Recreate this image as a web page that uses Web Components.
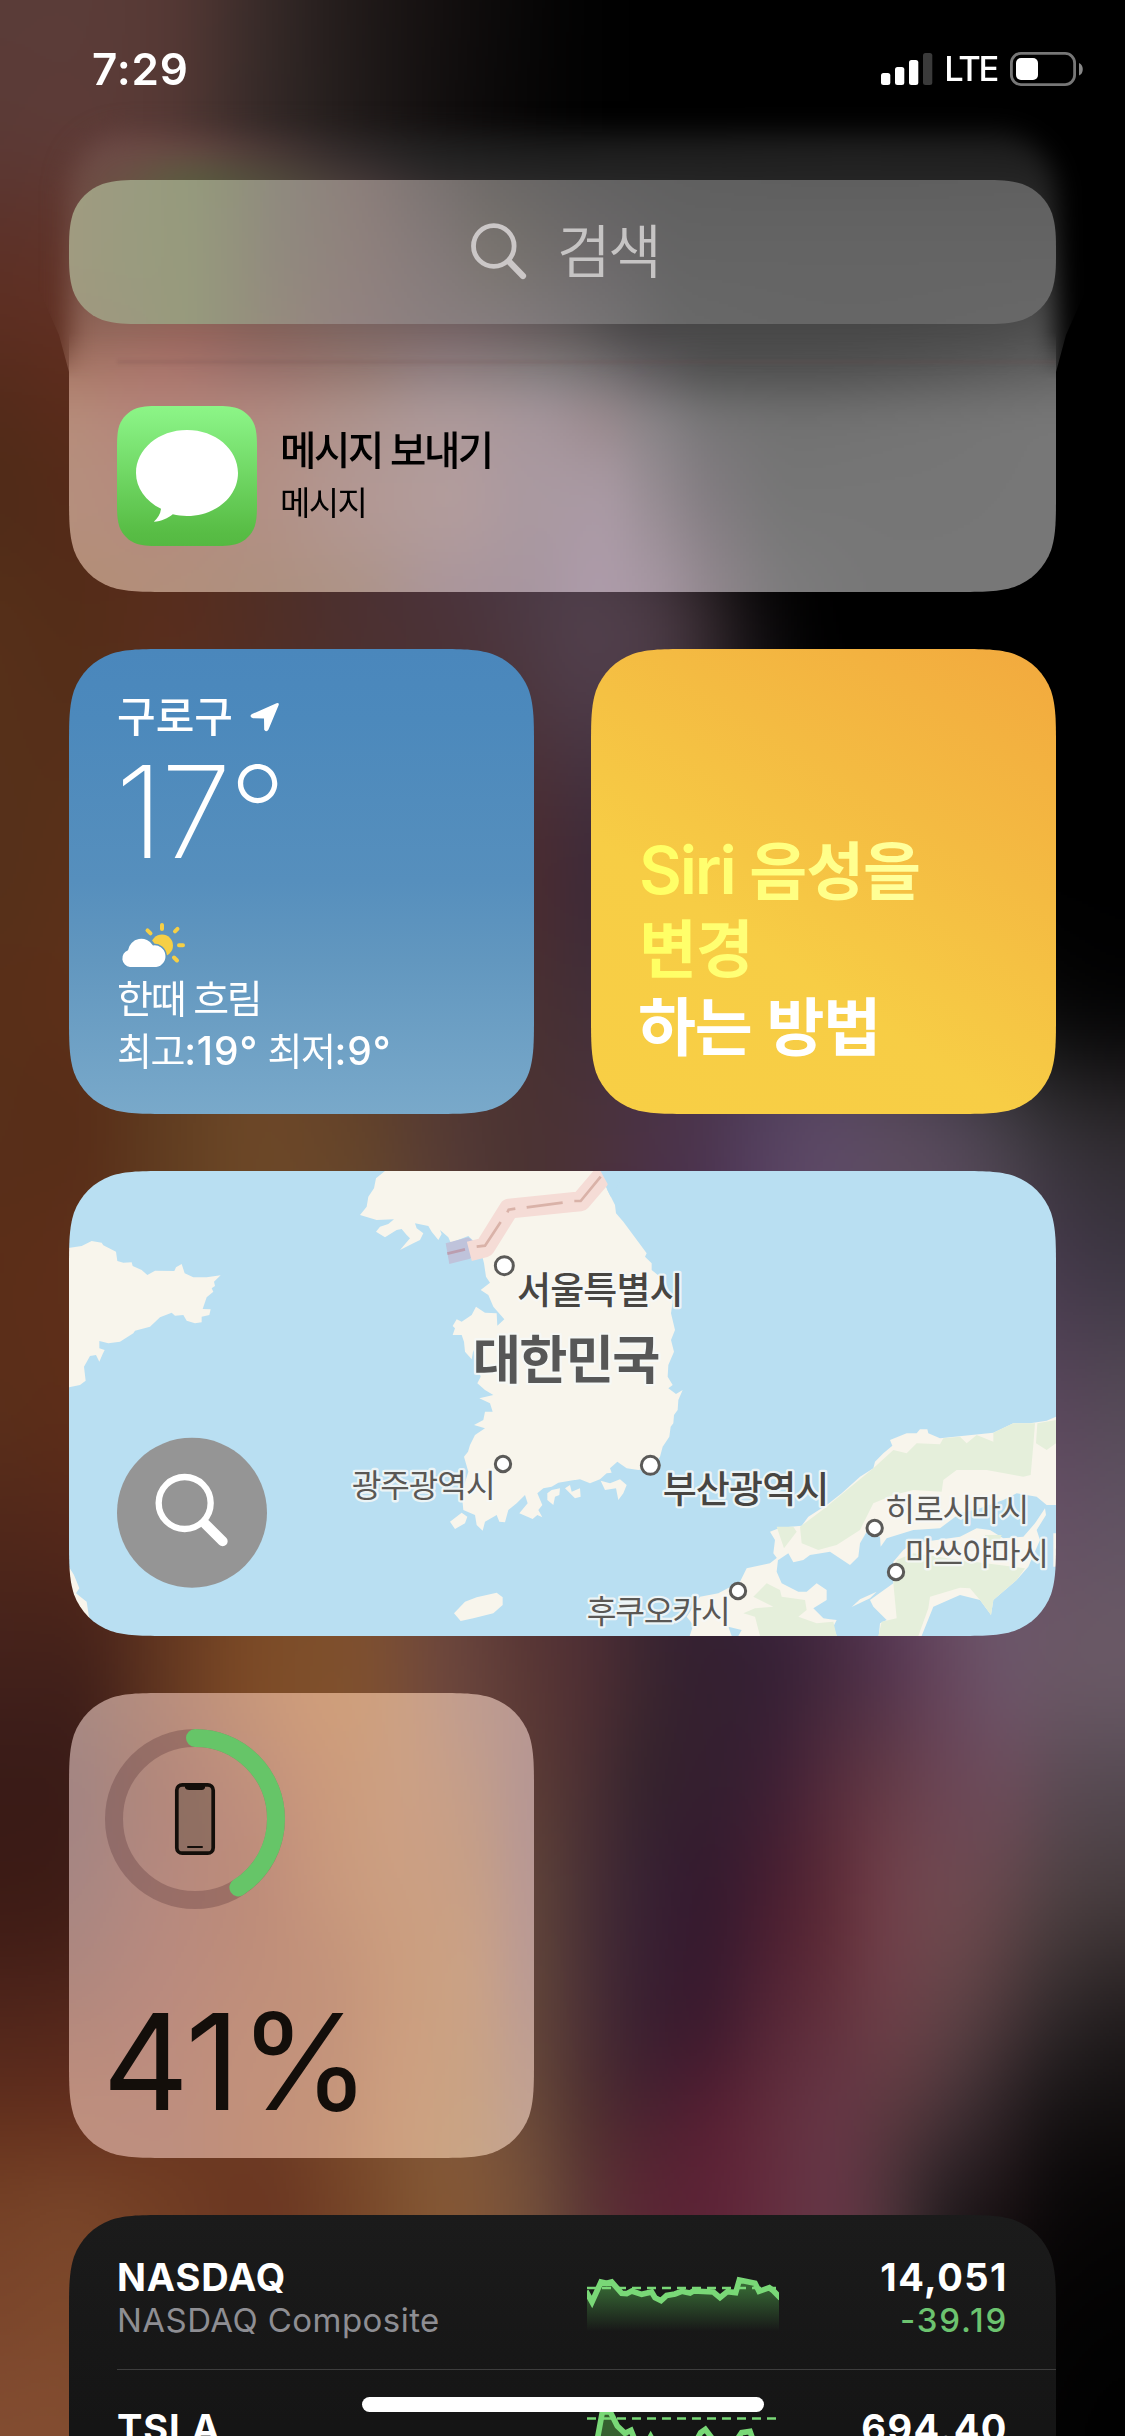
<!DOCTYPE html>
<html lang="ko">
<head>
<meta charset="utf-8">
<title>위젯</title>
<style>
html,body{margin:0;padding:0;background:#000}
body{width:1125px;height:2436px;overflow:hidden;font-family:"Inter","Noto Sans CJK KR",sans-serif}
</style>
</head>
<body>
<today-view></today-view>
<script>
const PALETTES={
 wall:{x:[0,69,160,260,350,450,530,590,650,700,760,830,890,950,1010,1056,1125],
  y:[0,130,240,310,380,500,620,880,1000,1140,1260,1400,1520,1665,1780,1900,2020,2120,2186,2300,2436],
  c:`5a3c38 5a3c38 563935 392b29 221b1a 130f0f 080707 020202 000000 000000 000000 000000 000000 000000 000000 000000 000000
5b3a36 5d3b37 563935 362a28 221c1b 110e0e 070606 020202 000000 000000 000000 000000 000000 000000 000000 000000 000000
5c3128 5f342a 563935 362a28 221c1b 110e0e 070606 020202 000000 000000 000000 000000 000000 000000 000000 000000 000000
5e2f22 603024 563025 3a2a28 2a2424 1a1718 0a0909 020202 000000 000000 000000 000000 000000 000000 000000 000000 000000
552b1c 5c2c1c 563025 4a3028 3a2a28 2a2424 1a1718 0a0909 000000 000000 000000 000000 000000 000000 000000 000000 000000
4f2b17 542a18 562c1c 503024 4a3030 4a3540 453845 3a3038 221c20 0a0809 000000 000000 000000 000000 000000 000000 000000
563019 542d18 582d1d 512e25 4c3030 4b3339 4d3a44 52404c 4e3d48 392d33 110e10 000000 000000 000000 000000 000000 000000
55301a 5a3019 5d371e 603c24 583828 4c3030 4a2b30 3e2a38 3a2a3a 30242e 201a22 100d11 000000 000000 000000 000000 000000
592f18 5c2f18 5f3a1f 68442a 603e2c 523632 4a3032 432f38 443044 443244 403448 383040 2a252e 1c1a20 100f11 060606 020203
572f19 572d18 603c20 6c4727 654429 543a34 4b3333 4b323a 4b3346 4c354e 54405e 5d4a66 5c4c60 55495a 464049 38343a 2f2b2f
5b2d18 5e2f19 623c20 6c4727 684830 5c3c34 4b3333 4b303c 4a2c48 4a3050 583e60 5d4a66 5c4c60 5a4a5c 504454 44394a 3c3642
5a2f1a 5d2d18 653c20 704827 704a30 603c34 4b3333 4b303c 402640 402848 503458 5a4462 604c64 604c64 5c4a60 58465a 544a56
51281a 55281a 603420 744927 784d2e 64423a 553436 4b303c 3a2436 382338 442a48 523650 60465e 6a5266 6c5668 655064 605362
43211b 43211a 613620 7d4b27 7f502e 6c463c 593735 4e2e33 3c2630 342030 352034 44293f 553650 66485f 6c566a 6b5866 6a5a66
391b17 3a1b17 5c3220 7d4b27 7f502e 6c463c 5b3b35 4a2f33 35232d 341f2f 3b1f33 542c3c 633b47 6b4656 6b4c5a 5d4b55 554a52
3d1b15 3f1c15 5a3020 744627 7a4d2e 704a3a 60443a 482f35 382133 351a2f 451d30 5c2b37 70404a 6f494f 60464a 4f4042 443a3c
51261b 54271b 60301f 704027 78502e 705038 624539 4b2f35 3a1f30 3b1a2e 512435 62313d 6b3f47 5e4145 463437 30282a 211c1d
63301d 652f1d 68341f 6c3c24 7a4b2c 80583a 6a4939 50302f 4c2230 561f32 602a3a 653645 5a383f 433035 281f22 171314 100e0e
733f24 764328 723e24 6b3722 764528 845735 744f3a 5c3635 5a2734 5c2336 632b3d 653645 4c3239 2a2024 1d1416 0d0a0b 080606
7a452b 7d482b 723e24 6b3722 764528 845735 744f3a 5c3635 5a2734 5c2336 632b3d 653645 4c3239 181214 0a0708 050404 030303
834d31 834d31 723e24 6b3722 764528 845735 744f3a 5c3635 5a2734 5c2336 632b3d 653645 4c3239 100c0e 040303 020202 000000`},
 glow:{x:[69,120,180,260,350,450,562,650,750,850,1000,1056],
  y:[132,150,178,325,365,422],
  c:`60423f 64443f 5c403b 443532 2c2625 1e1b1b 181818 181818 181818 181818 191919 191919
6c4a47 6e4b47 684944 4e3a38 312a2a 202020 1c1c1c 1d1d1d 1e1e1e 1f1f1f 1e1e1e 1c1c1c
6f4a44 6a5044 5c5a40 524c3c 433836 2c2929 262626 252525 242424 242424 242424 222222
8e6355 91665a 93645a 86625a 7d6561 756364 615a5b 4a4849 484848 484848 4c4c4c 525252
a67766 a7766a a5726a 98706a 91756f 8c7b7d 7b7373 5f5c5e 505050 525252 585858 606060
b78d7b b58a7a b2847a b08a80 ad938c ac9899 a2959a 878285 787778 727272 747474 777777`},
 message:{x:[69,160,260,350,450,530,600,650,720,800,900,1056],
  y:[324,365,393,415,500,592],
  c:`8e6355 93645a 86625a 7d6561 756364 665d5e 565253 4a4849 484848 484848 494949 525252
a67766 a8746a 98706a 91756f 8c7b7d 827a7b 716c6e 5f5c5e 505050 505050 535353 606060
b18371 b07e74 a87f77 a3867f 9f8e8f 968b8f 888083 767174 646464 616161 656565 6e6e6e
b68c7a b3847a b18980 ad928c ac9899 a5959a 98898d 878285 757475 717171 737373 777777
b58f7d b48b7e b29085 b29792 b29c9c aa99a0 a999a3 998e95 817c80 767676 767676 777777
b38e75 b28f7b ae907f ad9387 aa959a a896a0 ad9ba9 a797a3 8f868c 7c7b7c 777777 777777`},
 search:{x:[69,130,180,230,280,350,430,500,600,700,850,1056],
  y:[180,250,324],
  c:`a09c81 9a9b80 969a7d 92937c 8f8a7e 8c807b 7c7472 6e6a68 646363 606060 5f5f5f 606060
a09b80 9a9b7f 979a7d 94937d 918a7e 8f827d 847a79 78736f 6c696a 646464 646464 646464
a0987f 9c997f 989a7d 95937d 958b7e 928380 8a7f7f 847c7d 767374 686868 666666 686868`},
 battery:{x:[69,160,250,330,400,470,534],
  y:[1693,1790,1880,1980,2070,2158],
  c:`a98b83 b98f7e c8987a d09f7a cca083 bf9c90 b89791
a18483 b2877b c0907d cb9a7c cca084 c49e8a b39595
a68683 b5897f bd8c7a c9997d cc9f82 c79f86 b69797
ae877e b98a7e bf8e7a c3937a cb9d7e cba286 b79996
bb8c7c bd8d7e c2917b c4947b cd9f80 c9a284 bf9f94
c09280 be8f80 c29079 c79679 cda07f c9a586 c2a396`}
};

function squircle(w,h,r){
 const e=Math.min(1.52866*r,h/2),f=Math.min(1.08849*r,e*.8+.2*r),a=.86841*r,b=.63149*r,c=.07491*r,d=.37282*r,g=.16906*r;
 return `M${e},0H${w-e}C${w-f},0 ${w-a},0 ${w-b},${c}C${w-d},${g} ${w-g},${d} ${w-c},${b}C${w},${a} ${w},${f} ${w},${e}V${h-e}C${w},${h-f} ${w},${h-a} ${w-c},${h-b}C${w-g},${h-d} ${w-d},${h-g} ${w-b},${h-c}C${w-a},${h} ${w-f},${h} ${w-e},${h}H${e}C${f},${h} ${a},${h} ${b},${h-c}C${d},${h-g} ${g},${h-d} ${c},${h-b}C0,${h-a} 0,${h-f} 0,${h-e}V${e}C0,${f} 0,${a} ${c},${b}C${g},${d} ${d},${g} ${b},${c}C${a},0 ${f},0 ${e},0Z`;
}
function define(name,html,setup){
 const t=document.createElement('template');t.innerHTML=html;
 customElements.define(name,class extends HTMLElement{
  connectedCallback(){
   if(this.shadowRoot)return;
   this.attachShadow({mode:'open'}).append(t.content.cloneNode(true));
   if(setup)setup(this,this.shadowRoot);
  }
 });
}

/* Box blur along one axis, with the edge pixels repeated outside */
function boxBlur(src,n,lines,step,lineStep,r){
 const out=new Float32Array(src.length),k=2*r+1;
 for(let l=0;l<lines;l++)for(let ch=0;ch<3;ch++){
  const o=l*lineStep+ch,at=i=>src[o+Math.max(0,Math.min(n-1,i))*step];
  let sum=0;for(let i=-r;i<=r;i++)sum+=at(i);
  for(let i=0;i<n;i++){out[o+i*step]=sum/k;sum+=at(i+r+1)-at(i-r)}
 }
 return out;
}

/* Smooth colour mesh, interpolated between the stops of a palette */
define('color-field',`<style>:host{display:block;width:100%;height:100%}canvas{display:block;width:100%;height:100%}</style><canvas></canvas>`,(el,root)=>{
 const p=PALETTES[el.getAttribute('palette')],X=p.x,Y=p.y,soften=+(el.getAttribute('soften')||0);
 const C=p.c.split('\n').map(r=>r.trim().split(/\s+/).map(h=>[0,2,4].map(i=>parseInt(h.substr(i,2),16))));
 const x0=X[0],y0=Y[0],W=X[X.length-1]-x0,H=Y[Y.length-1]-y0,s=3;
 const cv=root.querySelector('canvas');cv.width=Math.ceil(W/s);cv.height=Math.ceil(H/s);
 const cw=cv.width,chh=cv.height,cx=cv.getContext('2d'),im=cx.createImageData(cw,chh);
 let buf=new Float32Array(cw*chh*4);
 const hermite=(K,V,i,t)=>{
  const n=K.length,h=K[i+1]-K[i],d=(V[i+1]-V[i])/h;
  const tan=j=>{if(j<=0||j>=n-1)return d;const l=(V[j]-V[j-1])/(K[j]-K[j-1]),r=(V[j+1]-V[j])/(K[j+1]-K[j]);return l*r<=0?0:2*l*r/(l+r)};
  const u=(t-K[i])/h,u2=u*u,u3=u2*u;
  return V[i]*(2*u3-3*u2+1)+h*tan(i)*(u3-2*u2+u)+V[i+1]*(3*u2-2*u3)+h*tan(i+1)*(u3-u2);
 };
 const seg=(K,v)=>{let i=0;while(i<K.length-2&&v>K[i+1])i++;return i};
 for(let px=0;px<cw;px++){
  const x=Math.min(x0+(px+.5)*W/cw,x0+W),i=seg(X,x);
  const cols=[0,1,2].map(k=>C.map(row=>hermite(X,row.map(c=>c[k]),i,x)));
  for(let py=0;py<chh;py++){
   const y=y0+(py+.5)*H/chh,j=seg(Y,y),o=(py*cw+px)*4;
   for(let k=0;k<3;k++)buf[o+k]=hermite(Y,cols[k],j,y);
  }
 }
 if(soften)for(let n=0;n<2;n++){
  buf=boxBlur(buf,cw,chh,4,cw*4,soften);
  buf=boxBlur(buf,chh,cw,cw*4,4,soften*2);
 }
 for(let o=0;o<buf.length;o+=4){for(let k=0;k<3;k++)im.data[o+k]=buf[o+k];im.data[o+3]=255}
 cx.putImageData(im,0,0);
});

/* Rounded widget tile: background slot plus content slot */
define('widget-card',`<style>
:host{display:grid;flex:none;overflow:hidden}
.bg,.body{grid-area:1/1;min-width:0;min-height:0}
.body{position:relative}
</style><div class="bg"><slot name="bg"></slot></div><div class="body"><slot></slot></div>`,(el)=>{
 const w=+el.getAttribute('w'),h=+el.getAttribute('h'),r=+(el.getAttribute('r')||66);
 el.style.width=w+'px';el.style.height=h+'px';
 el.style.clipPath=`path("${squircle(w,h,r)}")`;
});

define('status-bar',`<style>
:host{display:flex;flex:none;justify-content:space-between;height:180px;color:#fff;padding:0 41px 0 92px;box-sizing:border-box}
.time{font-size:44px;font-weight:640;line-height:138px;letter-spacing:.8px}
.right{display:flex;height:138px;align-items:center}
.lte{font-size:34.5px;font-weight:500;letter-spacing:-2.3px;line-height:142px;margin:0 13px 0 11px}
svg{display:block}
</style>
<div class="time">7:29</div>
<div class="right">
<svg width="52" height="34" viewBox="0 0 52 34"><g fill="#fff"><rect x="0" y="21" width="9.3" height="12" rx="2.5"/><rect x="14" y="15" width="9.3" height="18" rx="2.5"/><rect x="28" y="8" width="9.3" height="25" rx="2.5"/><rect x="42" y="1" width="9.3" height="32" rx="2.5" fill="#3a3a3a"/></g></svg>
<span class="lte">LTE</span>
<svg width="74" height="34" viewBox="0 0 74 34"><rect x="1.4" y="1.4" width="63.2" height="31.2" rx="9.5" fill="none" stroke="#777" stroke-width="2.8"/><rect x="6" y="6" width="22" height="22" rx="5" fill="#fff"/><path d="M69 11c5 1.500 5 11 0 12.500z" fill="#888"/></svg>
</div>`);

define('search-bar',`<style>
:host{display:block;flex:none;padding:0 69px}
.c{display:flex;height:144px;align-items:center;padding-left:402px;color:#c6c4c4}
span{font-size:58.500px;font-weight:350;line-height:144px;letter-spacing:-2.8px;margin-left:30px}
svg{display:block}
</style>
<widget-card w="987" h="144" r="53"><color-field slot="bg" palette="search"></color-field>
<div class="c"><svg width="56" height="58" viewBox="0 0 56 58" fill="none" stroke="#cbc7c7" stroke-linecap="round"><circle cx="22.800" cy="23" r="20.300" stroke-width="4.800"/><path d="M38 38.500 52 53" stroke-width="6.200"/></svg><span>검색</span></div></widget-card>`);

define('message-row',`<style>
:host{display:flex;padding:82px 0 0 48px}
svg{display:block}
.t{margin-left:23px;padding-top:19px;color:#000}
b{display:block;font-size:39.500px;font-weight:500;line-height:53px;letter-spacing:-2.400px;white-space:nowrap}
i{display:block;font-style:normal;font-size:33px;line-height:50px;letter-spacing:-1.600px}
</style>
<svg width="140" height="140" viewBox="0 0 140 140"><defs><linearGradient id="g" x2="0" y2="1"><stop offset="0" stop-color="#8cf586"/><stop offset=".08" stop-color="#88f183"/><stop offset=".9" stop-color="#58bd45"/><stop offset="1" stop-color="#55b942"/></linearGradient></defs><path id="sq" fill="url(#g)"/><path fill="#fff" d="M70 24c28.500 0 51 19.200 51 43s-22.500 43-51 43c-5 0-9.700-.5-14.200-1.700-5 3.900-11.200 7-19 7.500 3.800-3.600 6.700-7.800 7.200-13C28.500 95 19 82 19 67c0-23.800 22.500-43 51-43z"/></svg>
<div class="t"><b>메시지 보내기</b><i>메시지</i></div>`,(el,root)=>{root.querySelector('#sq').setAttribute('d',squircle(140,140,31))});

define('weather-widget',`<style>
:host{display:block;height:465px;box-sizing:border-box;padding:41px 0 0 48px;color:#fff;background:linear-gradient(#4a87bc,#4c89bc 15%,#568fbd 50%,#6297bf 67%,#79a9ca);white-space:nowrap}
.city{display:flex;align-items:center;height:53px;line-height:53px;font-size:42px;font-weight:500;letter-spacing:0}
.city svg{margin-left:17px}
.temp{font-size:128px;font-weight:250;height:137px;line-height:137px;letter-spacing:-3px;margin-left:-2px}
svg{display:block}
.cloud{margin:43px 0 0 4px}
.d{font-size:39px;line-height:63px;height:63px;letter-spacing:-2.200px}
.e{font-size:38px;line-height:41px;letter-spacing:-1.400px}
.n{font-weight:500;font-size:39px;letter-spacing:.9px}
</style>
<div class="city">구로구<svg width="30" height="30" viewBox="0 0 30 30"><path d="M2 12 26.500 1.300q2.800-.8 2.200 1.800L18.500 27.500q-1.800 3.500-4.300.3L14 16.500 3 16.200Q-1.500 14.500 2 12z" fill="#fff"/></svg></div>
<div class="temp">17°</div>
<svg class="cloud" width="64" height="44" viewBox="0 0 64 44"><g stroke="#f6cf45" stroke-width="4" stroke-linecap="round"><path d="M41 2v4M54 8.300l2.500-2.500M58 22.300h4M53 34.500l3 3M29.500 10.300 26.500 7.300"/></g><circle cx="41" cy="22.500" r="11" fill="#f6cf45"/><path d="M9 44.200a9 9 0 0 1-1.500-16.800A13.500 13.500 0 0 1 32.500 22.500a11 11 0 0 1 3 21.700z" fill="none" stroke="#5f96be" stroke-width="4"/><path d="M9 44a8.700 8.700 0 0 1-2-16.800A13.500 13.500 0 0 1 32 22.500a10.800 10.800 0 0 1 3.200 21.500z" fill="#fff"/></svg>
<div class="d">한때 흐림</div>
<div class="e">최고<span class="n">:19°</span> 최저<span class="n">:9°</span></div>`);

define('siri-widget',`<style>
:host{display:block;height:465px;box-sizing:border-box;padding:182px 0 0 48px;background:linear-gradient(33deg,#f8cf45 0,#f7cd45 36%,#f4bb42 66%,#f2a93e 100%);font-size:63px;font-weight:600;line-height:78px;letter-spacing:-1.100px;white-space:nowrap}
.y{width:284px;color:transparent;background:linear-gradient(90deg,#ffff60,#ffffa0);-webkit-background-clip:text;background-clip:text}
.l{font-size:66px;letter-spacing:-2.200px}
.w{color:#fff;margin-left:-1px}
</style><div class="y"><span class="l">Siri</span> 음성을<br>변경</div><div class="w">하는 방법</div>`);

define('map-widget',`<style>:host{display:block}svg{display:block}
text{fill:#5a5855;font-size:97px;stroke:#f6f8f7;stroke-width:14px;stroke-linejoin:round;paint-order:stroke;stroke-opacity:.85}
.m{fill:#474542;font-weight:500;font-size:111px}.k{fill:#575757;font-weight:600;font-size:157px}</style>
<svg width="987" height="465" viewBox="27 33 2961 1395">
<rect x="27" y="33" width="2961" height="1395" fill="#b9dff2"/>
<g fill="#f8f5ec">
<path d="M20 265 65 258 95 243 125 248 130 256 168 275 172 303 190 308 215 307 218 318 245 330 262 345 285 332 343 333 348 322 365 312 374 340 400 352 440 352 482 346 462 365 465 378 455 385 460 395 440 412 428 447 452 448 448 465 425 470 425 487 405 490 380 482 370 465 345 467 335 458 300 472 270 500 225 512 220 520 180 545 145 550 118 543 118 565 134 570 128 582 118 605 108 585 90 588 72 620 77 662 60 675 20 683ZM20 1210 42 1245 58 1285 48 1300 80 1325 86 1365 110 1440 20 1440Z"/>
<path d="M985 25 948 55 942 85 925 110 920 140 900 165 950 180 1002 178 985 192 960 200 948 215 975 232 1010 210 1025 207 1040 225 1050 235 1020 270 1060 250 1080 240 1090 220 1070 205 1065 190 1105 198 1115 215 1135 240 1145 222 1140 210 1165 232 1175 255 1180 245 1225 228 1260 262 1272 310 1278 350 1290 368 1262 390 1285 405 1300 440 1333 478 1312 497 1310 460 1275 458 1248 440 1235 465 1205 485 1190 478 1178 498 1185 505 1178 525 1205 525 1212 545 1215 575 1235 598 1240 570 1262 650 1252 670 1275 690 1300 705 1258 715 1290 730 1298 755 1275 755 1270 780 1242 795 1275 805 1245 825 1230 855 1224 875 1212 890 1225 935 1205 1000 1210 1050 1245 1065 1250 1095 1268 1112 1275 1085 1310 1065 1318 1085 1335 1087 1345 1050 1370 1030 1395 1005 1403 1030 1378 1060 1418 1077 1432 1065 1447 1072 1435 1050 1447 1035 1432 1000 1450 985 1475 980 1495 968 1530 962 1560 958 1590 970 1620 958 1640 940 1655 938 1650 925 1672 905 1700 925 1735 930 1775 925 1800 890 1808 860 1828 830 1832 800 1840 790 1842 765 1853 750 1855 720 1868 690 1848 702 1825 685 1838 675 1823 650 1825 615 1842 575 1833 540 1845 510 1833 460 1838 425 1800 350 1775 330 1775 310 1755 290 1760 280 1690 185 1668 160 1665 135 1645 95 1610 25ZM1462 1000 1475 990 1500 985 1498 1005 1485 1010 1480 1035 1462 1020ZM1515 985 1530 975 1535 995 1560 985 1562 1010 1545 1015ZM1622 962 1650 970 1680 958 1700 975 1690 1000 1675 1020 1668 985 1635 990ZM1170 1085 1205 1058 1222 1070 1215 1090 1185 1107ZM1182 1360 1215 1325 1250 1312 1310 1298 1328 1312 1328 1335 1300 1360 1240 1375 1202 1383Z"/>
<path d="M3000 765 2960 782 2910 790 2860 790 2800 818 2640 835 2605 820 2602 808 2580 808 2570 820 2540 820 2490 840 2497 857 2470 880 2445 905 2440 925 2400 950 2345 1000 2300 1035 2245 1070 2225 1097 2160 1103 2130 1115 2145 1140 2140 1180 2155 1200 2185 1180 2200 1207 2230 1200 2250 1185 2310 1175 2370 1215 2395 1190 2400 1150 2420 1115 2460 1130 2462 1160 2480 1135 2560 1110 2640 1105 2700 1060 2760 1045 2830 1020 2870 1000 2930 1010 2960 1035 3000 1035Z"/>
<path d="M2155 1190 2150 1235 2165 1270 2215 1295 2240 1295 2270 1270 2300 1290 2300 1320 2260 1345 2290 1375 2330 1380 2320 1400 2335 1440H1885L1900 1395 1880 1370 1920 1310 1975 1300 2040 1265 2060 1225 2130 1210Z"/>
<path d="M2500 1205 2530 1170 2560 1150 2700 1130 2750 1105 2790 1110 2830 1135 2890 1130 2925 1090 2955 1045 2958 1065 2930 1110 2940 1140 2905 1220 2870 1260 2800 1320 2793 1365 2760 1320 2700 1305 2620 1340 2580 1440H2455L2460 1390 2480 1380 2440 1340 2430 1320 2500 1270ZM2375 1341 2400 1318 2450 1295 2430 1315ZM2980 1120H3000V1220H2980Z"/>
</g>
<g fill="#e5efdb"><path d="M2570 850 2640 853 2650 835 2700 830 2720 850 2750 825 2800 845 2800 818 2860 790 2925 790 2920 855 2912 945 2890 950 2780 930 2690 930 2650 960 2645 995 2560 990 2500 1005 2440 1030 2400 1110 2330 1155 2275 1170 2225 1150 2220 1100 2300 1040 2440 925 2500 870 2540 880ZM2932 790 2988 780V850L2960 870 2928 850ZM2150 1100 2200 1100 2210 1115 2172 1165ZM2120 1270 2160 1290 2165 1310 2235 1320 2240 1350 2215 1370 2270 1390 2320 1385 2330 1428H2100L2085 1370 2050 1360 2085 1345 2140 1340 2080 1310Z"/><path d="M2510 1200 2560 1180 2700 1200 2895 1225 2870 1260 2800 1320 2793 1365 2760 1320 2730 1285 2700 1283 2610 1310 2605 1345 2575 1428H2455L2465 1385 2510 1375 2500 1270ZM2775 1125 2825 1125 2815 1150 2780 1150Z"/></g>
<path d="M2005 1400 2045 1410 2035 1428H2015Z" fill="#b9dff2"/>
<path d="M1157 250 1225 232 1262 262 1230 296 1168 312Z" fill="#bfc3db"/>
<path d="M1225 262 1240 245 1258 262Z" fill="#b9dff2"/>
<path d="M1228 274 1275 262 1347 146 1562 124 1635 38" fill="none" stroke="#f5dcd6" stroke-width="60" stroke-linejoin="round"/>
<path d="M1620 30 1643 72 1642 90 1652 110 1700 30Z" fill="#b9dff2"/>
<path d="M1162 281 1215 268" stroke="#bb9eb0" stroke-width="8"/>
<path d="M1250 260 1275 257 1322 186M1342 157 1346 149 1366 146M1400 142 1508 128M1543 123 1562 123 1622 50" fill="none" stroke="#d9b2a8" stroke-width="8"/>
<g fill="#fff" stroke="#5b5a58" stroke-width="9"><circle cx="1333" cy="317" r="27"/><circle cx="1329" cy="912" r="23"/><circle cx="1771" cy="916" r="27"/><circle cx="2444" cy="1104" r="23"/><circle cx="2508" cy="1236" r="23"/><circle cx="2034" cy="1293" r="23"/></g>
<text class="m" x="1371" y="431" textLength="500">서울특별시</text>
<text class="k" x="1238" y="657" textLength="563">대한민국</text>
<text x="875" y="1010" textLength="432">광주광역시</text>
<text class="m" x="1808" y="1028" textLength="500">부산광역시</text>
<text x="2476" y="1084" textLength="432">히로시마시</text>
<text x="2535" y="1216" textLength="432">마쓰야마시</text>
<text x="1580" y="1390" textLength="432">후쿠오카시</text>
<circle cx="396" cy="1058" r="225" fill="#959595"/>
<g fill="none" stroke="#fff" stroke-linecap="round"><circle cx="374" cy="1029" r="78" stroke-width="19"/><path d="M436 1092 488 1144" stroke-width="30"/></g>
</svg>`);

define('battery-widget',`<style>:host{display:block;padding:36px 0 0 36px}svg{display:block}
div{margin:84px 0 0 -2.500px;height:136px;font-size:134px;font-weight:400;line-height:136px;color:#130e0a;letter-spacing:-1px}</style>
<svg width="180" height="180" viewBox="0 0 180 180"><circle cx="90" cy="90" r="81" fill="none" stroke="#5a3538" stroke-opacity=".32" stroke-width="18"/><circle cx="90" cy="90" r="81" fill="none" stroke="#66c568" stroke-width="18" stroke-linecap="round" pathLength="100" stroke-dasharray="41 59" transform="rotate(-90 90 90)"/>
<rect x="71.800" y="55.800" width="36.400" height="68.400" rx="5.500" fill="#2a2a20" fill-opacity=".28" stroke="#130e0a" stroke-width="3.700"/><path d="M80 55h20v4q-1 2-3 2H84q-3 0-4-2z" fill="#130e0a"/><path d="M83 118h14" stroke="#130e0a" stroke-width="2" stroke-linecap="round"/></svg><div>41%</div>`);

define('stock-row',`<style>
:host{display:grid;grid-template-columns:470px 192px 1fr;padding:34px 48px 0 48px;height:154px;box-sizing:border-box;white-space:nowrap}
b{display:block;color:#fff;font-size:38px;font-weight:650;line-height:56px;letter-spacing:.9px}
i{display:block;font-style:normal;font-size:33px;line-height:30px;color:#8e8e93;letter-spacing:.45px}
.r{text-align:right}.r b{letter-spacing:1.500px}.r i{color:#6cc36f;font-weight:500;letter-spacing:1.800px}
</style><div><b><slot name="sym"></slot></b><i><slot name="name"></slot></i></div><slot name="chart"></slot><div class="r"><b><slot name="price"></slot></b><i><slot name="change"></slot></i></div>`);

define('stocks-widget',`<style>
:host{display:block;height:465px;background:linear-gradient(#1b1b1b,#151515 45%)}
hr{border:0;margin:0 0 0 48px;height:1px;background:#3d3d3d}
svg{display:block;margin-top:-3px}
stock-row+hr+stock-row{margin-top:-4px}
</style>
<stock-row><span slot="sym">NASDAQ</span><span slot="name">NASDAQ Composite</span>
<svg slot="chart" width="192" height="90" viewBox="81 30 576 270"><defs><linearGradient id="f" gradientUnits="userSpaceOnUse" x1="0" x2="0" y1="130" y2="285"><stop offset="0" stop-color="#3a7338"/><stop offset="1" stop-color="#3a7338" stop-opacity="0"/></linearGradient></defs><path d="M81 170 96 195 123 138 140 142 155 138 190 172 200 172 215 165 245 175 275 168 285 185 303 194 320 178 345 174 365 166 390 170 400 165 460 168 480 184 502 167 527 170 538 132 585 142 597 165 628 155 640 164 657 182V290H81Z" fill="url(#f)"/><path d="M81 156H657" stroke="#79d877" stroke-width="8" stroke-dasharray="27 18"/><path d="M78 165 96 198 123 138 140 142 155 138 185 172 200 173 215 165 245 175 275 168 285 185 303 194 320 178 345 174 365 166 390 171 400 165 460 168 480 185 502 167 527 170 538 132 585 142 597 166 628 155 640 164 662 187" fill="none" stroke="#79d877" stroke-width="17"/></svg>
<span slot="price">14,051</span><span slot="change">-39.19</span></stock-row>
<hr>
<stock-row><span slot="sym">TSLA</span>
<svg slot="chart" width="192" height="90" viewBox="81 483 576 270"><path d="M108 620 127 531H153L178 580 200 595 230 620Z" fill="#35602f"/><path d="M81 547.500H657" stroke="#79d877" stroke-width="8" stroke-dasharray="27 18"/><path d="M110 620 127 528H151L172 570 195 592 213 583 228 620M262 620 272 602 282 620M406 620 422 590 436 580 460 612 475 618 525 620 545 590 570 586 582 620" fill="none" stroke="#79d877" stroke-width="17"/></svg>
<span slot="price">694.40</span></stock-row>`);

define('today-view',`<style>
:host{display:grid;grid-template:2436px/1125px;width:1125px;height:2436px;overflow:hidden;position:relative;isolation:isolate}
.wall,.stack{grid-area:1/1;min-width:0;min-height:0}
.stack{display:flex;flex-direction:column;position:relative;z-index:1}
.halo{position:absolute;left:0;top:60px;width:1125px;height:350px;z-index:0;-webkit-mask:linear-gradient(#000 320px,transparent 334px);mask:linear-gradient(#000 320px,transparent 334px);clip-path:polygon(0 0,1125px 0,1125px 200px,1085px 232px,1066px 275px,1056px 312px,1056px 350px,69px 350px,69px 312px,59px 275px,40px 232px,0 200px)}
.halo color-field{position:absolute;left:69px;top:72px;width:987px;height:290px;border-radius:60px 60px 0 0;overflow:hidden;filter:blur(13px)}
.msg{height:268px;flex:none;margin:0 69px;overflow:hidden}
.msg widget-card{margin-top:-197px}
.msgbg{padding-top:197px;height:268px;-webkit-mask:linear-gradient(transparent 205px,#000 252px);mask:linear-gradient(transparent 205px,#000 252px)}
.msgbody{padding-top:197px}
.line{position:absolute;left:48px;right:0;top:233px;height:4px;background:#6f4a4a;opacity:.16;filter:blur(1.500px)}
.grid{display:flex;flex-wrap:wrap;gap:57px;padding:57px 69px 0;flex:none}
.home{position:absolute;left:362px;top:2397px;width:402px;height:15px;border-radius:8px;background:#fff;z-index:3}
</style>
<div class="wall"><color-field palette="wall" soften="7"></color-field></div>
<div class="halo"><color-field palette="glow"></color-field></div>
<div class="stack">
<status-bar></status-bar>
<search-bar></search-bar>
<div class="msg"><widget-card w="987" h="465"><div class="msgbg" slot="bg"><color-field palette="message" soften="3"></color-field></div><div class="msgbody"><div class="line"></div><message-row></message-row></div></widget-card></div>
<div class="grid">
<widget-card w="465" h="465"><weather-widget></weather-widget></widget-card>
<widget-card w="465" h="465"><siri-widget></siri-widget></widget-card>
<widget-card w="987" h="465"><map-widget></map-widget></widget-card>
<widget-card w="465" h="465"><color-field slot="bg" palette="battery" soften="7"></color-field><battery-widget></battery-widget></widget-card>
<widget-card w="987" h="465"><stocks-widget></stocks-widget></widget-card>
</div>
</div>
<div class="home"></div>`);
</script>
</body>
</html>
